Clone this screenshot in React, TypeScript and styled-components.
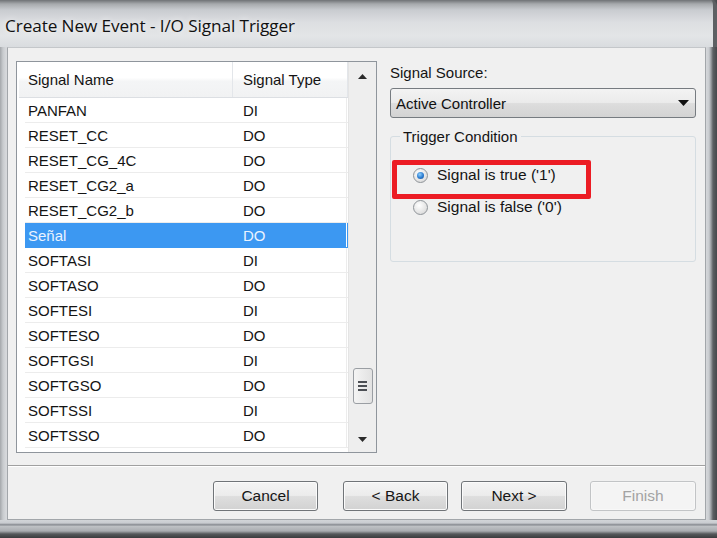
import React from "react";
import styled, { createGlobalStyle } from "styled-components";

const Global = createGlobalStyle`
  html, body { margin: 0; padding: 0; background: #3c3e40; }
  body { font-family: "Liberation Sans", Arial, sans-serif; }
  * { box-sizing: border-box; }
`;

const Window = styled.div`
  width: 717px;
  height: 538px;
  display: flex;
  flex-direction: column;
  background: linear-gradient(90deg, #a4a7ab 0, #c8cbce 3px, #d6d8db 6px, #d6d8db 706px, #c9ccd0 709px, #9a9da1 711px, #5d6063 713px, #46484b 717px);
  overflow: hidden;
`;

const TitleBar = styled.div`
  height: 47px;
  flex: none;
  display: flex;
  align-items: center;
  padding: 4px 0 0 5px;
  background: linear-gradient(180deg, #6f7275 0, #a7aaad 4px, #c9ccd0 10px, #dcdee1 22px, #e3e5e7 36px, #d9dcdf 47px);
  border-right: 4px solid #5d6063;
  border-top-right-radius: 6px;
`;

const Title = styled.span`
  font-family: "Open Sans", "Liberation Sans", sans-serif;
  font-size: 17.2px;
  color: #111;
  letter-spacing: -0.1px;
  text-shadow: 0 0 6px rgba(255, 255, 255, 0.9);
`;

const FrameBody = styled.div`
  flex: 1;
  display: flex;
  flex-direction: column;
  padding: 0 11px 0 7px;
`;

const Client = styled.div`
  width: 699px;
  height: 473px;
  flex: none;
  display: flex;
  flex-direction: column;
  background: #f0f0f0;
  border: 1px solid #a2a6aa;
  border-top-color: #c4c7ca;
`;

const BottomFrame = styled.div`
  flex: 1;
  background: linear-gradient(180deg, #d2d5d8 0, #c9ccd0 3px, #80848a 5px, #c0c3c6 6px, #a9acb0 11px, #55585b 14px, #3a3c3e 18px);
  margin: 0 -11px 0 -7px;
`;

const Main = styled.div`
  display: flex;
  gap: 13px;
  padding: 13px 9px 0 8px;
  height: 405px;
`;

const ListBox = styled.div`
  width: 361px;
  height: 392px;
  flex: none;
  display: flex;
  background: #fff;
  border: 1px solid #8f959c;
`;

const ListInner = styled.div`
  flex: 1;
  display: flex;
  flex-direction: column;
  padding-left: 2px;
`;

const HeaderRow = styled.div`
  height: 36px;
  display: flex;
  background: linear-gradient(180deg, #ffffff 0, #ffffff 45%, #f4f5f6 55%, #f1f2f3 100%);
  border-bottom: 1px solid #dcdfe3;
`;

const HeaderCell = styled.div<{ $w: number; $pl: number }>`
  width: ${(p) => p.$w}px;
  padding-left: ${(p) => p.$pl}px;
  display: flex;
  align-items: center;
  font-size: 15px;
  color: #141414;
  border-right: 1px solid #e3e6ea;
`;

const Row = styled.div<{ $sel?: boolean }>`
  height: 25px;
  margin-left: 6px;
  display: flex;
  background: ${(p) => (p.$sel ? "#3c98f2" : "#fff")};
  color: ${(p) => (p.$sel ? "#eaf3ff" : "#141414")};
  border-bottom: 1px solid ${(p) => (p.$sel ? "#3c98f2" : "#ececec")};
`;

const Cell = styled.div<{ $w: number; $pl: number; $divider?: boolean; $sel?: boolean }>`
  width: ${(p) => p.$w}px;
  padding-left: ${(p) => p.$pl}px;
  display: flex;
  align-items: center;
  font-size: 15px;
  border-right: ${(p) => (p.$divider ? `1px solid ${p.$sel ? "#ffffff" : "#ececec"}` : "none")};
`;

const ScrollBar = styled.div`
  width: 28px;
  flex: none;
  display: flex;
  flex-direction: column;
  align-items: center;
  background: #eeeeee;
  border-left: 1px solid #e4e4e4;
  padding: 12px 0 10px;
`;

const ArrowGlyph = styled.svg`
  flex: none;
`;

const Track = styled.div`
  flex: 1;
  width: 100%;
  display: flex;
  flex-direction: column;
  justify-content: flex-end;
  align-items: center;
  padding-bottom: 33px;
`;

const Thumb = styled.div`
  width: 20px;
  height: 36px;
  border: 1px solid #9a9ea3;
  border-radius: 3px;
  background: linear-gradient(90deg, #f4f4f4, #e2e2e2);
  display: flex;
  flex-direction: column;
  align-items: center;
  justify-content: center;
  gap: 2px;
`;

const Grip = styled.div`
  width: 9px;
  height: 2px;
  background: #4c4f54;
`;

const RightPanel = styled.div`
  width: 306px;
  display: flex;
  flex-direction: column;
`;

const Label = styled.div`
  font-size: 15px;
  color: #141414;
  height: 24px;
  padding-top: 3px;
`;

const Combo = styled.div`
  margin-top: 3px;
  height: 30px;
  border: 1px solid #767b80;
  border-radius: 3px;
  background: linear-gradient(180deg, #f3f3f3 0, #ebebeb 48%, #dddddd 52%, #d3d3d3 100%);
  display: flex;
  align-items: center;
  justify-content: space-between;
  padding: 0 6px 0 5px;
  font-size: 15px;
  color: #111;
`;

const Group = styled.fieldset`
  position: relative;
  margin: 10px 0 0;
  padding: 0;
  height: 134px;
  border: 1px solid #d5dde2;
  border-radius: 3px;
`;

const Legend = styled.legend`
  margin-left: 9px;
  padding: 0 3px;
  font-size: 15px;
  color: #141414;
`;

const RadioList = styled.div`
  display: flex;
  flex-direction: column;
  gap: 10px;
  padding: 19px 0 0 22px;
`;

const RadioRow = styled.label`
  display: flex;
  align-items: center;
  gap: 9px;
  height: 22px;
  font-size: 15.5px;
  color: #141414;
`;

const RadioDot = styled.span<{ $on?: boolean }>`
  width: 15px;
  height: 15px;
  border-radius: 50%;
  border: 1px solid #8f9499;
  background: radial-gradient(circle at 40% 35%, #ffffff 0, #e4e4e4 60%, #cfcfcf 100%);
  display: flex;
  align-items: center;
  justify-content: center;
  &::after {
    content: "";
    width: 7px;
    height: 7px;
    border-radius: 50%;
    display: ${(p) => (p.$on ? "block" : "none")};
    background: radial-gradient(circle at 40% 35%, #8fd0ff 0, #2a7bd0 55%, #1a4f8f 100%);
  }
`;

const Highlight = styled.div`
  position: absolute;
  left: 1px;
  top: 15px;
  width: 199px;
  height: 39px;
  border: 5px solid #ec1c24;
  border-radius: 2px;
  pointer-events: none;
`;

const Separator = styled.div`
  margin: 12px 0 0;
  height: 2px;
  border-top: 1px solid #a0a0a0;
  border-bottom: 1px solid #ffffff;
`;

const Footer = styled.div`
  display: flex;
  justify-content: flex-end;
  padding: 14px 9px 0 0;
`;

const Button = styled.button<{ $ml: number; $w: number; $disabled?: boolean }>`
  margin-left: ${(p) => p.$ml}px;
  width: ${(p) => p.$w}px;
  height: 30px;
  border-radius: 3px;
  font-family: "Liberation Sans", Arial, sans-serif;
  font-size: 15.5px;
  padding: 0;
  color: ${(p) => (p.$disabled ? "#a3a3a3" : "#161616")};
  border: 1px solid ${(p) => (p.$disabled ? "#c2c4c6" : "#707478")};
  background: ${(p) =>
    p.$disabled
      ? "#f4f4f4"
      : "linear-gradient(180deg, #f4f4f4 0, #ececec 48%, #dedede 52%, #d2d2d2 100%)"};
  box-shadow: inset 0 0 0 1px ${(p) => (p.$disabled ? "#f8f8f8" : "#fbfbfb")};
`;

const rows: [string, string][] = [
  ["PANFAN", "DI"],
  ["RESET_CC", "DO"],
  ["RESET_CG_4C", "DO"],
  ["RESET_CG2_a", "DO"],
  ["RESET_CG2_b", "DO"],
  ["Señal", "DO"],
  ["SOFTASI", "DI"],
  ["SOFTASO", "DO"],
  ["SOFTESI", "DI"],
  ["SOFTESO", "DO"],
  ["SOFTGSI", "DI"],
  ["SOFTGSO", "DO"],
  ["SOFTSSI", "DI"],
  ["SOFTSSO", "DO"],
];

const Tri = ({ up }: { up?: boolean }) => (
  <ArrowGlyph width="9" height="5" viewBox="0 0 9 5">
    <path d={up ? "M0 5 L4.5 0 L9 5 Z" : "M0 0 L9 0 L4.5 5 Z"} fill="#2a2a2a" />
  </ArrowGlyph>
);

export default function App() {
  return (
    <>
      <Global />
      <Window>
        <TitleBar>
          <Title>Create New Event - I/O Signal Trigger</Title>
        </TitleBar>
        <FrameBody>
          <Client>
            <Main>
              <ListBox>
                <ListInner>
                  <HeaderRow>
                    <HeaderCell $w={214} $pl={9}>Signal Name</HeaderCell>
                    <HeaderCell $w={115} $pl={10}>Signal Type</HeaderCell>
                  </HeaderRow>
                  {rows.map(([n, t]) => {
                    const sel = n === "Señal";
                    return (
                      <Row key={n} $sel={sel}>
                        <Cell $w={208} $pl={3} $sel={sel}>{n}</Cell>
                        <Cell $w={114} $pl={10} $divider $sel={sel}>{t}</Cell>
                      </Row>
                    );
                  })}
                </ListInner>
                <ScrollBar>
                  <Tri up />
                  <Track>
                    <Thumb>
                      <Grip />
                      <Grip />
                      <Grip />
                    </Thumb>
                  </Track>
                  <Tri />
                </ScrollBar>
              </ListBox>
              <RightPanel>
                <Label>Signal Source:</Label>
                <Combo>
                  <span>Active Controller</span>
                  <svg width="11" height="6" viewBox="0 0 11 6">
                    <path d="M0 0 L11 0 L5.5 6 Z" fill="#111" />
                  </svg>
                </Combo>
                <Group>
                  <Legend>Trigger Condition</Legend>
                  <RadioList>
                    <RadioRow>
                      <RadioDot $on />
                      Signal is true ('1')
                    </RadioRow>
                    <RadioRow>
                      <RadioDot />
                      Signal is false ('0')
                    </RadioRow>
                  </RadioList>
                  <Highlight />
                </Group>
              </RightPanel>
            </Main>
            <Separator />
            <Footer>
              <Button $ml={0} $w={105}>Cancel</Button>
              <Button $ml={25} $w={105}>&lt; Back</Button>
              <Button $ml={13} $w={106}>Next &gt;</Button>
              <Button $ml={23} $w={106} $disabled>Finish</Button>
            </Footer>
          </Client>
          <BottomFrame />
        </FrameBody>
      </Window>
    </>
  );
}
